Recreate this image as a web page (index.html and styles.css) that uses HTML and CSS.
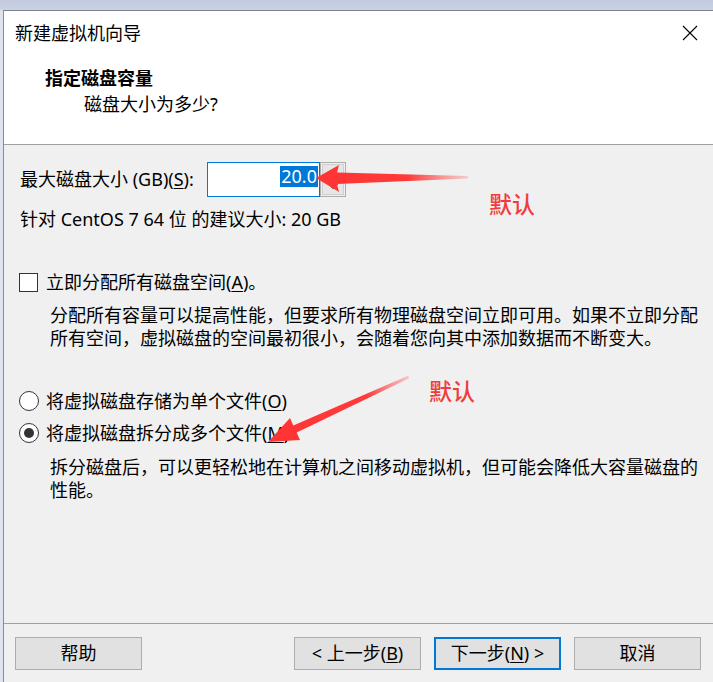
FILE: index.html
```html
<!DOCTYPE html>
<html lang="zh-CN">
<head>
<meta charset="utf-8">
<title>新建虚拟机向导</title>
<link rel="stylesheet" href="styles.css">
</head>
<body>
<div class="strip"></div>
<div class="window">
  <div class="titlebar">
    <span class="title">新建虚拟机向导</span>
    <svg class="close" width="16" height="16" viewBox="0 0 16 16"><path d="M1 1 L15 15 M15 1 L1 15" stroke="#000" stroke-width="1.1" fill="none"/></svg>
  </div>
  <div class="header">
    <div class="h-title">指定磁盘容量</div>
    <div class="h-sub">磁盘大小为多少?</div>
  </div>
  <div class="content">
    <div class="size-row">
      <span class="size-label">最大磁盘大小 (GB)(<u>S</u>):</span>
      <div class="spin-input"><span class="sel">20.0</span></div>
      <div class="spin-btn">
        <div class="spin-inner">
          <span class="tri-up"></span>
          <span class="tri-down"></span>
        </div>
      </div>
    </div>
    <p class="hint">针对 CentOS 7 64 位 的建议大小: 20 GB</p>
    <div class="opt-row check-row">
      <span class="checkbox"></span>
      <span class="opt-label">立即分配所有磁盘空间(<u>A</u>)。</span>
    </div>
    <p class="desc">分配所有容量可以提高性能，但要求所有物理磁盘空间立即可用。如果不立即分配<br>所有空间，虚拟磁盘的空间最初很小，会随着您向其中添加数据而不断变大。</p>
    <div class="opt-row radio-row first">
      <span class="radio"></span>
      <span class="opt-label">将虚拟磁盘存储为单个文件(<u>O</u>)</span>
    </div>
    <div class="opt-row radio-row second">
      <span class="radio checked"></span>
      <span class="opt-label">将虚拟磁盘拆分成多个文件(<u>M</u>)</span>
    </div>
    <p class="desc desc2">拆分磁盘后，可以更轻松地在计算机之间移动虚拟机，但可能会降低大容量磁盘的<br>性能。</p>
  </div>
  <div class="footer">
    <button class="btn">帮助</button>
    <div class="nav">
      <button class="btn">&lt; 上一步(<u>B</u>)</button>
      <button class="btn primary">下一步(<u>N</u>) &gt;</button>
      <button class="btn">取消</button>
    </div>
  </div>
</div>
<svg class="annot" width="713" height="682" viewBox="0 0 713 682">
  <defs>
    <linearGradient id="g1" x1="316" y1="0" x2="470" y2="0" gradientUnits="userSpaceOnUse">
      <stop offset="0" stop-color="#ff3434"/>
      <stop offset="0.6" stop-color="#ff3a3a"/>
      <stop offset="1" stop-color="#ff6a6a" stop-opacity="0.25"/>
    </linearGradient>
    <linearGradient id="g2" x1="268" y1="442" x2="410" y2="376" gradientUnits="userSpaceOnUse">
      <stop offset="0" stop-color="#ff3434"/>
      <stop offset="0.7" stop-color="#ff3a3a"/>
      <stop offset="1" stop-color="#ff6a6a" stop-opacity="0.3"/>
    </linearGradient>
  </defs>
  <polygon points="316,178 339,165 337,172.5 468,176 468,178.5 337,184 339,192" fill="url(#g1)"/>
  <polygon points="268,442 290,418 293.3,425.4 408,375.8 409.2,378.2 296.7,432.6 300,440" fill="url(#g2)"/>
</svg>
<span class="note n1">默认</span>
<span class="note n2">默认</span>
</body>
</html>
```
FILE: styles.css
```css
* { box-sizing: border-box; }

html, body {
  margin: 0;
  padding: 0;
}

body {
  width: 713px;
  height: 682px;
  overflow: hidden;
  position: relative;
  background: #dfe3ee;
  font-family: "Noto Sans", "Noto Sans CJK SC", sans-serif;
  font-size: 18px;
  color: #000;
}

.strip {
  height: 10px;
  background: linear-gradient(#c3c9de, #ccd2e5);
}

.window {
  margin-left: 3px;
  height: 672px;
  border-left: 1px solid #8c8c8c;
  border-top: 1px solid #7d8190;
  background: #f0f0f0;
  display: flex;
  flex-direction: column;
}

.titlebar {
  height: 44px;
  background: #fff;
  display: flex;
  align-items: center;
  justify-content: space-between;
  padding: 0 15px 0 11px;
}

.title {
  line-height: 44px;
  font-size: 18px;
}

.close {
  display: block;
  margin-top: -1px;
}

.header {
  height: 90px;
  background: #fff;
  border-bottom: 1px solid #a0a0a0;
  padding-top: 12px;
}

.h-title {
  font-weight: 700;
  line-height: 23px;
  padding-left: 41px;
}

.h-sub {
  line-height: 23px;
  margin-top: 3px;
  padding-left: 80px;
}

.content {
  flex: 1;
  padding-left: 16px;
  padding-top: 17px;
}

.size-row {
  display: flex;
  align-items: center;
  height: 35px;
}

.size-label {
  width: 187px;
  line-height: 23px;
}

.spin-input {
  width: 113px;
  height: 35px;
  background: #fff;
  border: 1px solid #0078d7;
  display: flex;
  justify-content: flex-end;
  align-items: flex-start;
  padding: 3px 1px 0 0;
}

.sel {
  background: #0078d7;
  color: #fff;
  line-height: 21px;
  padding: 0 1px;
}

.spin-btn {
  width: 26px;
  height: 35px;
  border: 1px solid #adadad;
  padding: 1px;
  background: #f0f0f0;
}

.spin-inner {
  height: 100%;
  border: 1px solid #cfcfcf;
  background: #e6e6e6;
  display: flex;
  flex-direction: column;
  align-items: center;
  justify-content: space-around;
}

.tri-up, .tri-down {
  width: 0;
  height: 0;
  border-left: 5px solid transparent;
  border-right: 5px solid transparent;
}

.tri-up { border-bottom: 5px solid #000; }
.tri-down { border-top: 5px solid #000; }

.hint {
  margin: 11px 0 0;
  line-height: 23px;
}

.opt-row {
  display: flex;
  align-items: center;
  height: 20px;
  margin-left: -1px;
}

.check-row { margin-top: 41px; }

.checkbox {
  width: 19px;
  height: 19px;
  border: 1px solid #333;
  background: #fff;
  margin-right: 8px;
}

.radio {
  width: 20px;
  height: 20px;
  border: 1px solid #333;
  border-radius: 50%;
  background: #fff;
  margin-right: 7px;
  display: flex;
  align-items: center;
  justify-content: center;
}

.radio.checked::after {
  content: "";
  width: 10px;
  height: 10px;
  border-radius: 50%;
  background: #333;
}

.opt-label {
  line-height: 23px;
}

.desc {
  margin: 12px 0 0 30px;
  line-height: 23px;
  white-space: nowrap;
}

.radio-row.first { margin-top: 41px; }
.radio-row.second { margin-top: 12px; }

.desc2 { margin-top: 13px; }

u {
  text-decoration-thickness: 1px;
  text-underline-offset: 2px;
}

.footer {
  height: 59px;
  border-top: 1px solid #a0a0a0;
  display: flex;
  justify-content: space-between;
  padding: 13px 12px 12px 11px;
}

.nav {
  display: flex;
  gap: 13px;
}

.btn {
  width: 127px;
  height: 33px;
  border: 1px solid #adadad;
  background: #e1e1e1;
  font-family: "Noto Sans", "Noto Sans CJK SC", sans-serif;
  font-size: 18px;
  color: #000;
  line-height: 23px;
  padding: 0;
}

.btn.primary {
  border: 2px solid #0078d7;
}

.annot {
  position: absolute;
  left: 0;
  top: 0;
  pointer-events: none;
}

.note {
  position: absolute;
  color: #f23c3c;
  font-size: 23px;
  font-weight: 500;
  line-height: 26px;
  font-family: "Noto Sans CJK SC", sans-serif;
}

.n1 { left: 489px; top: 190px; }
.n2 { left: 429px; top: 377px; }
```
